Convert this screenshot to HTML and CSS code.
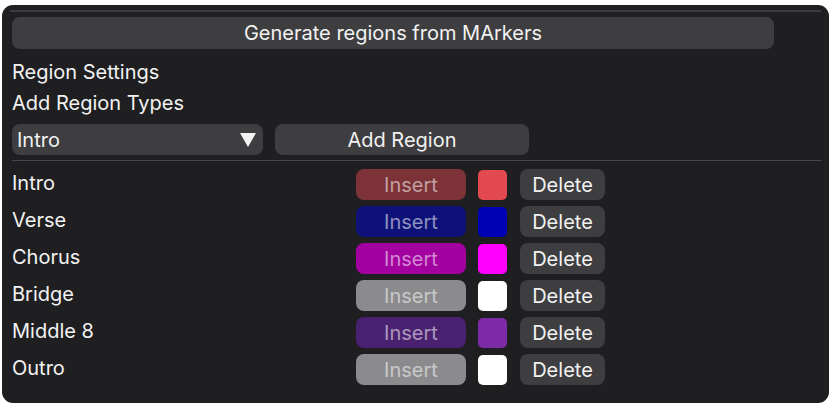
FILE: index.html
```html
<!DOCTYPE html>
<html>
<head>
  <title>Region Settings</title>
  <meta charset="UTF-8">
  <link rel="stylesheet" href="styles.css">
</head>
<body>
  <div class="window">
    <div class="topline"></div>
    <button class="btn btn-wide">Generate regions from MArkers</button>
    <div class="labels">
      <div class="label">Region Settings</div>
      <div class="label">Add Region Types</div>
    </div>
    <div class="add-row">
      <div class="combo">
        <span>Intro</span>
        <span class="arrow"></span>
      </div>
      <button class="btn btn-add">Add Region</button>
    </div>
    <div class="separator"></div>

    <div class="region-list">
      <div class="region-row">
        <span class="region-name">Intro</span>
        <button class="btn btn-insert insert-intro">Insert</button>
        <span class="swatch swatch-intro"></span>
        <button class="btn btn-delete">Delete</button>
      </div>
      <div class="region-row">
        <span class="region-name">Verse</span>
        <button class="btn btn-insert insert-verse">Insert</button>
        <span class="swatch swatch-verse"></span>
        <button class="btn btn-delete">Delete</button>
      </div>
      <div class="region-row">
        <span class="region-name">Chorus</span>
        <button class="btn btn-insert insert-chorus">Insert</button>
        <span class="swatch swatch-chorus"></span>
        <button class="btn btn-delete">Delete</button>
      </div>
      <div class="region-row">
        <span class="region-name">Bridge</span>
        <button class="btn btn-insert insert-bridge">Insert</button>
        <span class="swatch swatch-bridge"></span>
        <button class="btn btn-delete">Delete</button>
      </div>
      <div class="region-row">
        <span class="region-name">Middle 8</span>
        <button class="btn btn-insert insert-middle">Insert</button>
        <span class="swatch swatch-middle"></span>
        <button class="btn btn-delete">Delete</button>
      </div>
      <div class="region-row">
        <span class="region-name">Outro</span>
        <button class="btn btn-insert insert-outro">Insert</button>
        <span class="swatch swatch-outro"></span>
        <button class="btn btn-delete">Delete</button>
      </div>
    </div>
  </div>
</body>
</html>
```

FILE: styles.css
```css
body {
  margin: 0;
  padding: 5px 6px 6px 2px;
  background-color: #ffffff;
  font-family: Inter, "Liberation Sans", sans-serif;
  font-size: 20px;
  color: #f2f2f2;
}
.window {
  height: 398px;
  box-sizing: border-box;
  background-color: #1f1f21;
  border-radius: 11px;
  padding: 5px 8px 0 10px;
  display: flex;
  flex-direction: column;
}
.topline {
  height: 2px;
  background-color: #3c3c3e;
  margin: 0 0 5px -2px;
}
.btn {
  font-family: inherit;
  font-size: 20px;
  color: #f2f2f2;
  background-color: #3e3e40;
  border: none;
  border-radius: 8px;
  padding: 0;
  height: 31px;
  cursor: pointer;
}
.btn-wide {
  width: 762px;
  height: 32px;
}
.labels {
  margin-top: 8px;
}
.label {
  height: 31px;
  line-height: 31px;
}
.add-row {
  display: flex;
  gap: 12px;
  margin-top: 5px;
}
.combo {
  width: 251px;
  height: 31px;
  box-sizing: border-box;
  background-color: #3e3e40;
  border-radius: 8px;
  padding: 0 7px 0 5px;
  display: flex;
  align-items: center;
  justify-content: space-between;
}
.arrow {
  width: 0;
  height: 0;
  border-left: 8px solid transparent;
  border-right: 8px solid transparent;
  border-top: 14px solid #f2f2f2;
}
.btn-add {
  width: 254px;
}
.separator {
  height: 1px;
  background-color: #48484a;
  margin: 5px 0 0 0;
}
.region-list {
  display: flex;
  flex-direction: column;
  gap: 6px;
  margin-top: 8px;
}
.region-row {
  display: flex;
  align-items: center;
  height: 31px;
}
.region-name {
  width: 344px;
  margin-top: -4px;
}
.btn-insert {
  width: 110px;
  color: rgba(255, 255, 255, 0.55);
}
.swatch {
  width: 29px;
  height: 30px;
  border-radius: 5px;
  margin-left: 12px;
  margin-right: 13px;
}
.btn-delete {
  width: 85px;
}
.insert-intro { background-color: #7c3236; }
.insert-verse { background-color: #0d1178; }
.insert-chorus { background-color: #a2009f; }
.insert-bridge { background-color: #8b8b8d; }
.insert-middle { background-color: #4a2170; }
.insert-outro { background-color: #8b8b8d; }
.swatch-intro { background-color: #e34a50; }
.swatch-verse { background-color: #0000b4; }
.swatch-chorus { background-color: #ff00ff; }
.swatch-bridge { background-color: #ffffff; }
.swatch-middle { background-color: #7d2aa6; }
.swatch-outro { background-color: #ffffff; }
```
